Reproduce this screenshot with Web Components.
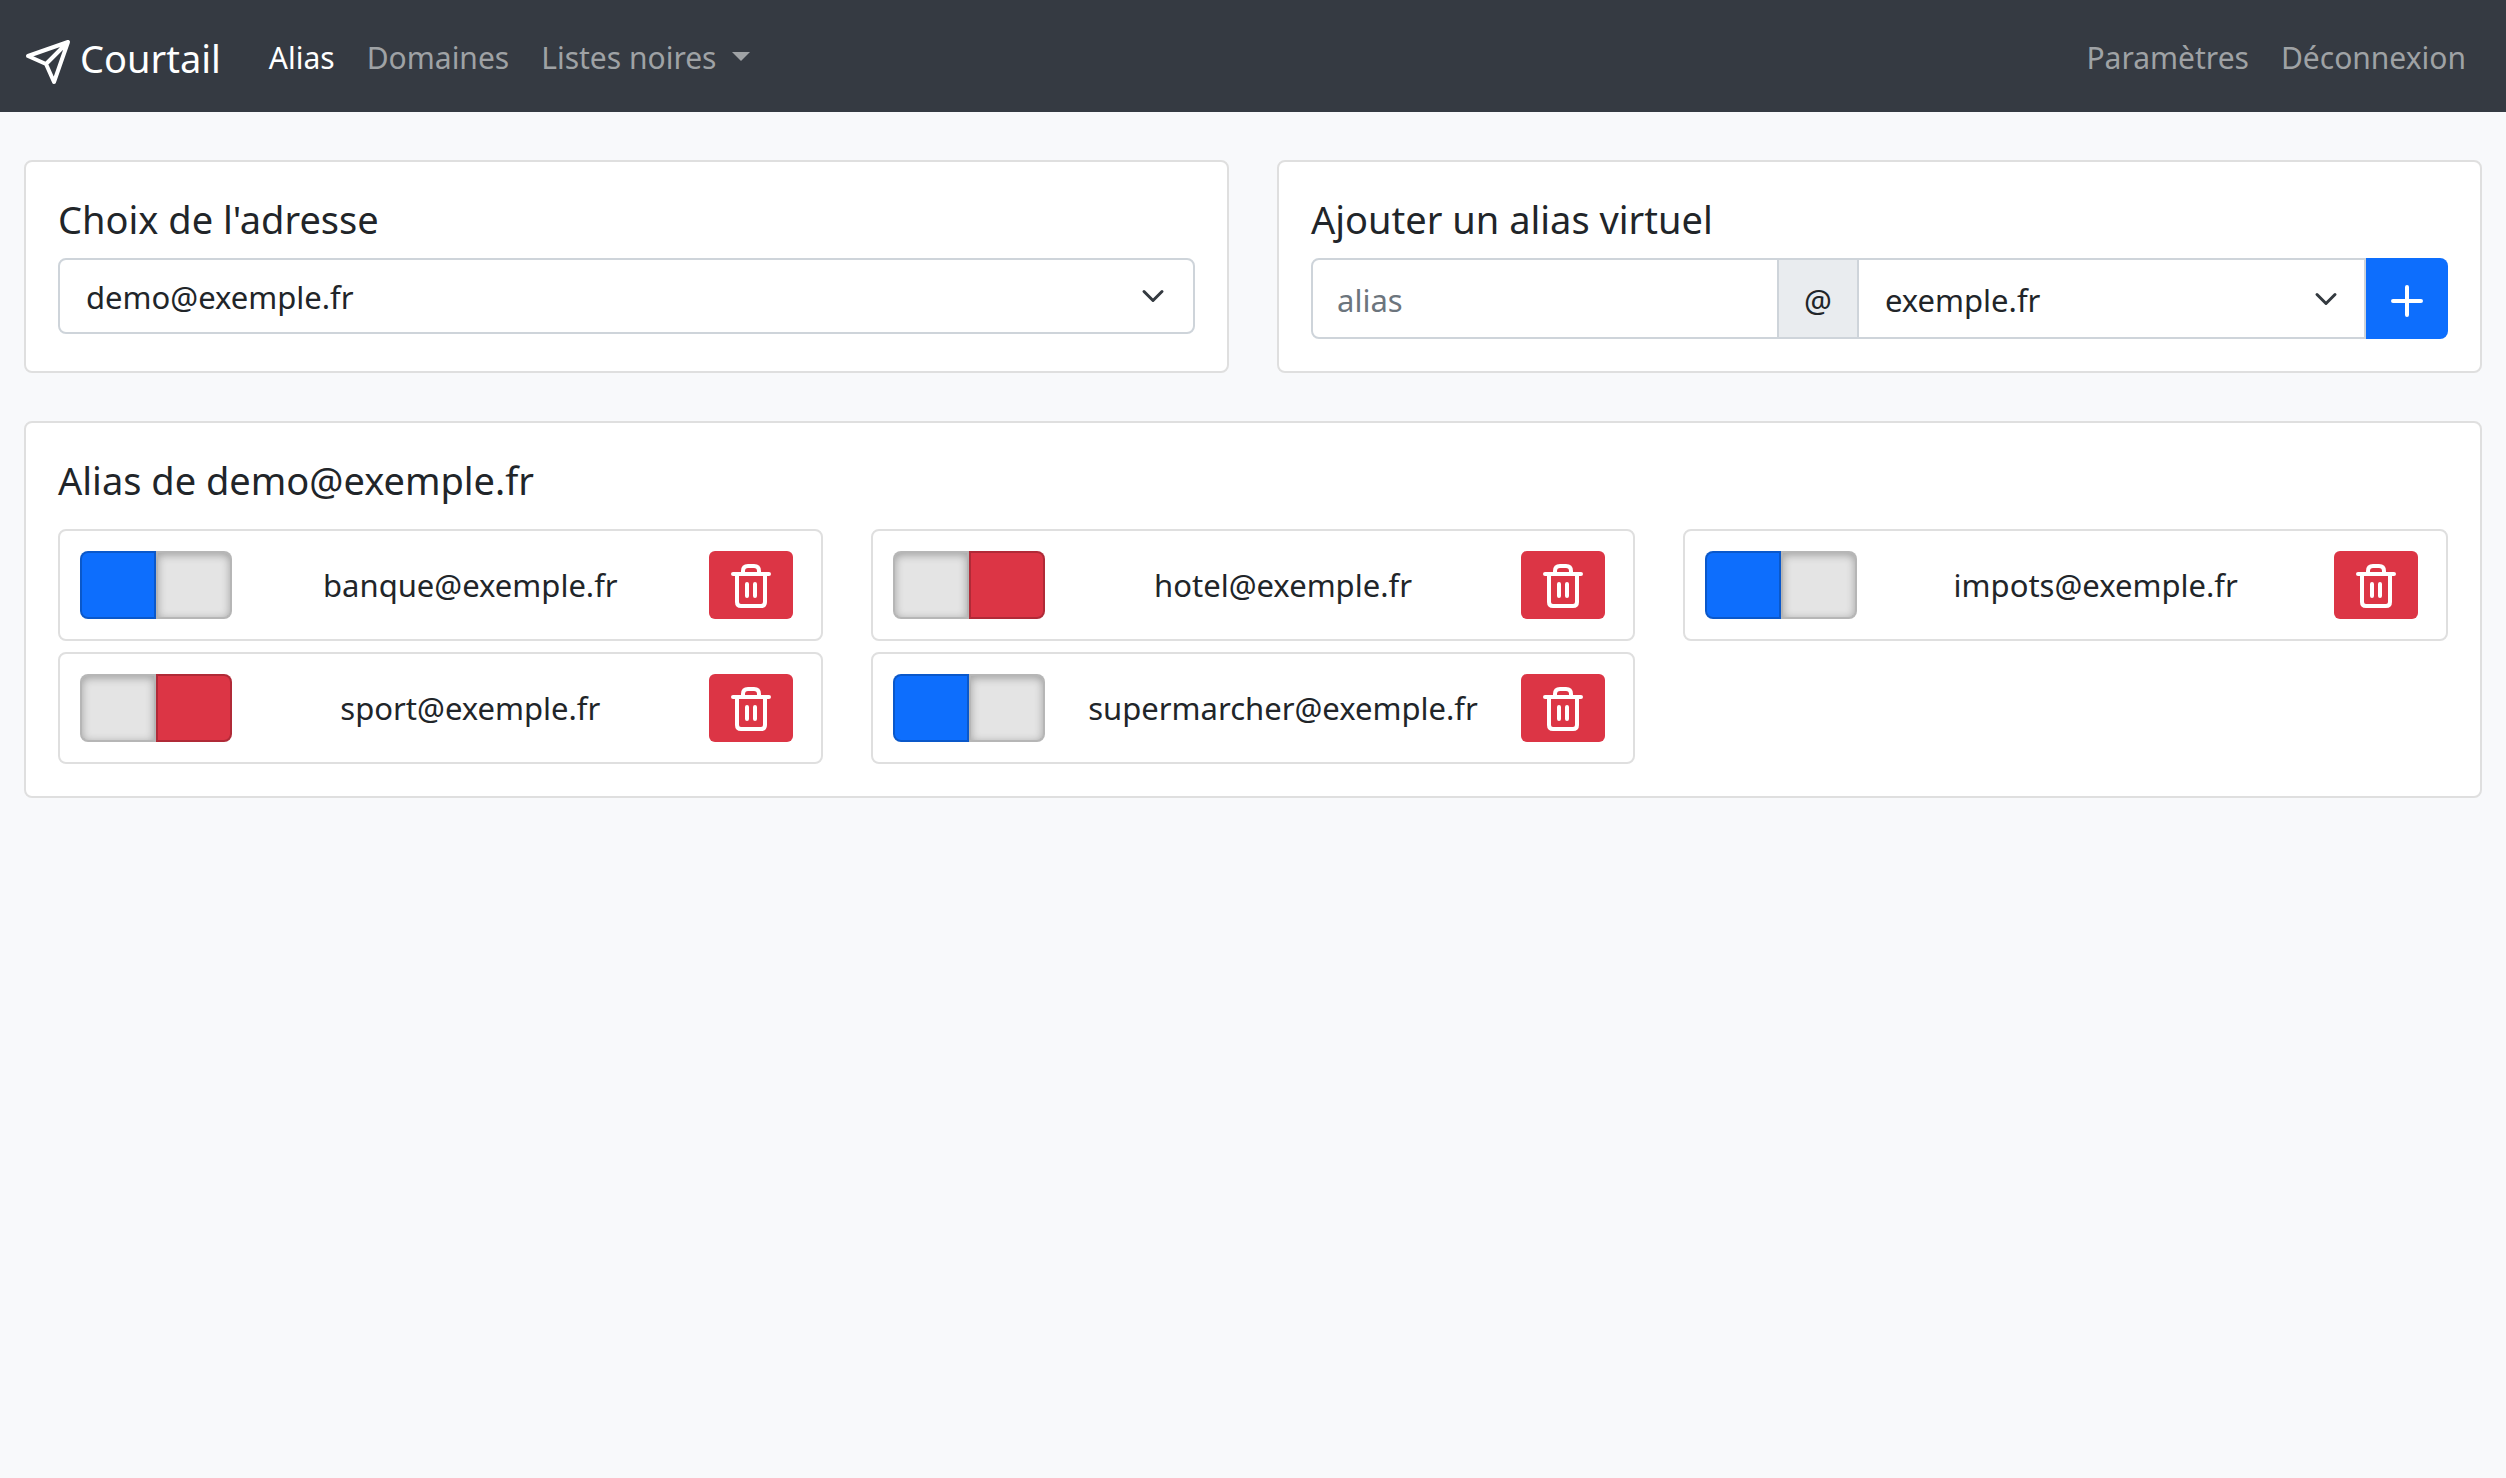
<!DOCTYPE html>
<html lang="fr">
<head>
<meta charset="utf-8">
<meta name="viewport" content="width=device-width, initial-scale=1">
<title>Courtail</title>
<style>
  html { --blue: #0d6efd; --red: #dc3545; --line: #dfdfdf; --field-line: #ced4da; --ink: #212529; }
  body { margin: 0; min-height: 100vh; background: #f8f9fb; color: var(--ink); font: 31px/48px "Noto Sans", sans-serif; }
</style>
</head>
<body>
<courtail-app></courtail-app>

<template id="tpl-app">
  <style>
    :host { display: block; }
    main { display: grid; grid-template-columns: 1fr 1fr; gap: 48px; padding: 48px 24px; }
    .wide { grid-column: 1 / -1; }
    .aliases { list-style: none; margin: 24px 0 0; padding: 0; display: grid; grid-template-columns: repeat(3, 1fr); column-gap: 48px; row-gap: 11px; }
  </style>
  <nav-bar></nav-bar>
  <main>
    <card-panel heading="Choix de l'adresse"><address-picker></address-picker></card-panel>
    <card-panel heading="Ajouter un alias virtuel"><alias-form></alias-form></card-panel>
    <card-panel class="wide" heading="Alias de demo@exemple.fr">
      <ul class="aliases">
        <li><alias-item enabled>banque@exemple.fr</alias-item></li>
        <li><alias-item>hotel@exemple.fr</alias-item></li>
        <li><alias-item enabled>impots@exemple.fr</alias-item></li>
        <li><alias-item>sport@exemple.fr</alias-item></li>
        <li><alias-item enabled>supermarcher@exemple.fr</alias-item></li>
      </ul>
    </card-panel>
  </main>
</template>

<template id="tpl-nav">
  <style>
    :host { display: block; background: #353a42; font-size: 30px; }
    nav { display: flex; align-items: center; box-sizing: border-box; height: 112px; padding: 4px 24px 0; }
    a { color: #9fa2a5; text-decoration: none; padding: 0 16px; white-space: nowrap; }
    a.brand { display: flex; align-items: center; gap: 8px; color: #fff; font-size: 38px; padding: 0; margin-right: 32px; }
    a.active { color: #fff; }
    a.drop { display: flex; align-items: center; gap: 16px; }
    .caret { border: 9px solid transparent; border-top-color: currentColor; border-bottom: 0; margin-bottom: 4px; }
    .end { display: flex; margin-left: auto; }
    svg { width: 48px; height: 56px; }
  </style>
  <nav aria-label="Principal">
    <a class="brand" href="#"><svg viewBox="0 0 48 56" fill="none" stroke="#fff" stroke-width="4" stroke-linejoin="round" aria-hidden="true"><path d="M44 12 4 26l18 8 8 18ZM44 12 22 34"/></svg><span>Courtail</span></a>
    <a class="active" href="#alias" aria-current="page">Alias</a>
    <a href="#domaines">Domaines</a>
    <a class="drop" href="#listes"><span>Listes noires</span><span class="caret"></span></a>
    <div class="end"><a href="#parametres">Paramètres</a><a href="#deconnexion">Déconnexion</a></div>
  </nav>
</template>

<template id="tpl-card">
  <style>
    :host { display: block; box-sizing: border-box; background: #fff; border: 2px solid var(--line); border-radius: 8px; padding: 32px; }
    h2 { margin: 0 0 14px; font-size: 38px; line-height: 50px; font-weight: 400; }
  </style>
  <h2></h2>
  <slot></slot>
</template>

<template id="tpl-picker">
  <style>
    :host { display: grid; }
    select, svg { grid-area: 1 / 1; }
    select { appearance: none; width: 100%; height: 76px; box-sizing: border-box; padding: 2px 26px 0; border: 2px solid var(--field-line); border-radius: 8px; background: #fff; color: inherit; font: inherit; }
    svg { justify-self: end; align-self: center; width: 24px; height: 24px; margin-right: 30px; pointer-events: none; }
  </style>
  <select aria-label="Choix de l'adresse"><option>demo@exemple.fr</option></select>
  <svg viewBox="0 0 16 16" fill="none" stroke="#343a40" stroke-width="2" stroke-linecap="round" stroke-linejoin="round" aria-hidden="true"><path d="m2 5 6 6 6-6"/></svg>
</template>

<template id="tpl-form">
  <style>
    form { display: flex; height: 81px; }
    input, select, label { box-sizing: border-box; height: 100%; border: 2px solid var(--field-line); background: #fff; color: inherit; font: inherit; }
    input { flex: 1 1 52px; min-width: 0; padding: 2px 24px 0; border-radius: 8px 0 0 8px; }
    input::placeholder { color: #6c757d; opacity: 1; }
    label { display: flex; align-items: center; padding: 2px 25px 0; margin: 0 -2px; background: #e9ecef; }
    .pick { flex: 1 1 93px; display: grid; grid-template-rows: 100%; }
    select { appearance: none; grid-area: 1 / 1; width: 100%; padding: 2px 26px 0; }
    .pick svg { grid-area: 1 / 1; justify-self: end; align-self: center; width: 24px; height: 24px; margin-right: 28px; pointer-events: none; }
    button { display: grid; place-items: center; width: 82px; padding: 4px 0 0; border: 0; border-radius: 0 8px 8px 0; background: var(--blue); }
    button svg { width: 32px; height: 32px; }
  </style>
  <form>
    <input id="alias" type="text" placeholder="alias" aria-label="alias">
    <label for="domain">@</label>
    <div class="pick">
      <select id="domain"><option>exemple.fr</option></select>
      <svg viewBox="0 0 16 16" fill="none" stroke="#343a40" stroke-width="2" stroke-linecap="round" stroke-linejoin="round" aria-hidden="true"><path d="m2 5 6 6 6-6"/></svg>
    </div>
    <button type="button" aria-label="Ajouter"><svg viewBox="0 0 32 32" stroke="#fff" stroke-width="4" stroke-linecap="round" aria-hidden="true"><path d="M16 2v28M2 16h28"/></svg></button>
  </form>
</template>

<template id="tpl-item">
  <style>
    :host { display: flex; align-items: center; box-sizing: border-box; height: 112px; padding: 0 28px 0 20px; border: 2px solid var(--line); border-radius: 8px; }
    .name { flex: 1; text-align: center; }
    .toggle { appearance: none; display: flex; flex: none; width: 152px; height: 68px; margin: 0; cursor: pointer; }
    .toggle::before, .toggle::after { content: ""; flex: none; width: 50%; box-sizing: border-box; border: 2px solid rgba(0,0,0,.2); background: #e4e4e4; box-shadow: inset 0 2px 8px rgba(0,0,0,.3); }
    .toggle::before { border-radius: 8px 0 0 8px; }
    .toggle::after { border-radius: 0 8px 8px 0; }
    .toggle:checked::before { background: var(--blue); box-shadow: none; }
    .toggle:not(:checked)::after { background: var(--red); box-shadow: none; }
    button { display: grid; place-items: center; flex: none; width: 84px; height: 68px; padding: 2px 0 0; border: 0; border-radius: 6px; background: var(--red); }
    svg { width: 48px; height: 48px; }
  </style>
  <input class="toggle" type="checkbox" role="switch" aria-label="Activer l'alias">
  <span class="name"><slot></slot></span>
  <button type="button" aria-label="Supprimer"><svg viewBox="0 0 48 48" fill="none" stroke="#fff" stroke-width="4" stroke-linecap="round" stroke-linejoin="round" aria-hidden="true"><path d="M6 12h36M10 12v28q0 4 4 4h20q4 0 4-4V12M16 12V9q0-5 5-5h6q5 0 5 5v3M20 22v12M28 22v12"/></svg></button>
</template>

<script>
  const mount = (host, id) => {
    const root = host.attachShadow({ mode: "open" });
    root.append(document.getElementById(id).content.cloneNode(true));
    return root;
  };
  customElements.define("nav-bar", class extends HTMLElement {
    constructor() { super(); mount(this, "tpl-nav"); }
  });
  customElements.define("card-panel", class extends HTMLElement {
    constructor() { super(); mount(this, "tpl-card"); }
    connectedCallback() { this.shadowRoot.querySelector("h2").textContent = this.getAttribute("heading"); }
  });
  customElements.define("address-picker", class extends HTMLElement {
    constructor() { super(); mount(this, "tpl-picker"); }
  });
  customElements.define("alias-form", class extends HTMLElement {
    constructor() { super(); mount(this, "tpl-form"); }
  });
  customElements.define("alias-item", class extends HTMLElement {
    constructor() { super(); mount(this, "tpl-item"); }
    connectedCallback() { this.shadowRoot.querySelector("input").checked = this.hasAttribute("enabled"); }
  });
  customElements.define("courtail-app", class extends HTMLElement {
    constructor() { super(); mount(this, "tpl-app"); }
  });
</script>
</body>
</html>
